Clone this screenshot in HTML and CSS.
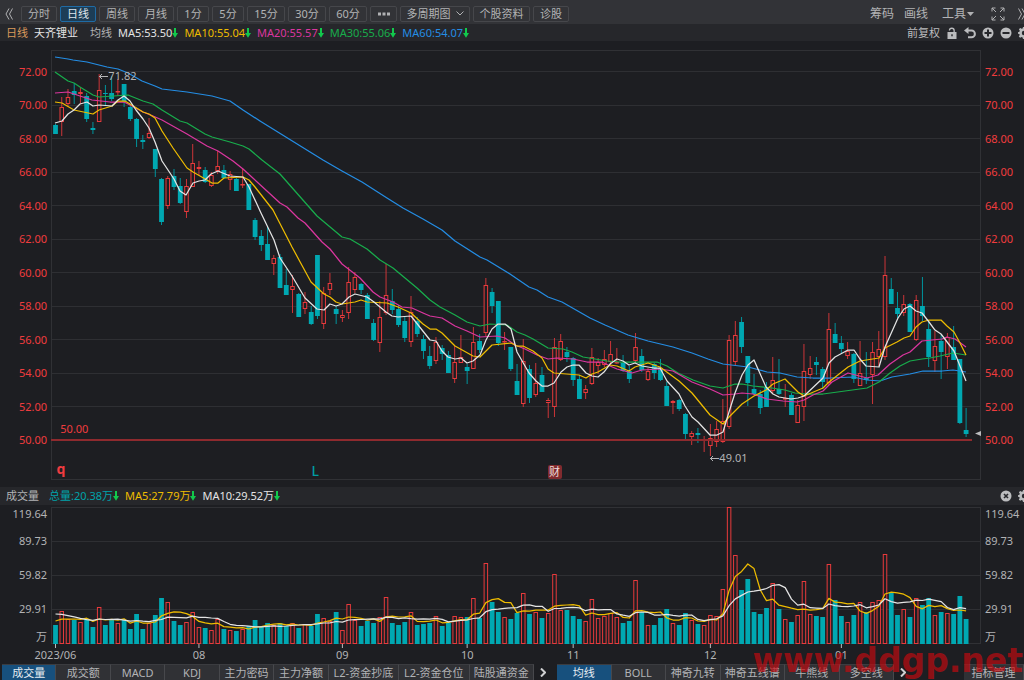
FILE: index.html
```html
<!DOCTYPE html>
<html lang="zh-CN">
<head>
<meta charset="utf-8">
<title>天齐锂业 日线</title>
<link rel="stylesheet" href="styles.css">
</head>
<body>
<svg class="defs" aria-hidden="true">
  <symbol id="down" viewBox="0 0 6 10"><path d="M2 0h2v5h2L3 9.800 0 5h2z" fill="currentColor"/></symbol>
  <symbol id="gear" viewBox="0 0 12 12"><path fill="currentColor" fill-rule="evenodd" d="M5 0h2l.4 1.700 1 .4L9.900 1.200l1.300 1.400-.8 1.500.4.900 1.200.3v1.600l-1.300.5-.4.900.8 1.600-1.300 1.200-1.500-.8-.9.400L7 12H5l-.4-1.600-1-.4-1.500.8L.8 9.500l.9-1.500-.4-1L0 6.800V5.200l1.400-.5.4-1L.9 2.300 2.200 1l1.500.8.9-.4zM6 3.800a2.200 2.200 0 1 0 0 4.400 2.200 2.200 0 0 0 0-4.400z"/></symbol>
  <symbol id="left-arrow" viewBox="0 0 9 7"><path d="M0 3.500h9M3 1L.5 3.500 3 6" fill="none" stroke="currentColor"/></symbol>
</svg>

<nav class="toolbar">
  <button class="more-left" aria-label="收起"><svg width="8" height="12" viewBox="0 0 8 12"><path d="M4 .5L1 6l3 5.500M7.500.5l-3 5.500 3 5.500"/></svg></button>
  <div class="periods">
    <button class="period">分时</button>
    <button class="period active">日线</button>
    <button class="period">周线</button>
    <button class="period">月线</button>
    <button class="period short">1分</button>
    <button class="period short">5分</button>
    <button class="period mid">15分</button>
    <button class="period mid">30分</button>
    <button class="period mid">60分</button>
    <button class="period dots" aria-label="更多周期"><svg width="12" height="4" viewBox="0 0 12 4"><path d="M0 .5h3v3H0zM4.500.5h3v3h-3zM9 .5h3v3H9z"/></svg></button>
    <button class="period multi">多周期图<svg width="8" height="5" viewBox="0 0 8 5"><path d="M.5.5L4 4 7.500.5"/></svg></button>
    <button class="period info">个股资料</button>
    <button class="period">诊股</button>
  </div>
  <div class="tools">
    <button>筹码</button>
    <button>画线</button>
    <button class="menu">工具<svg width="7" height="4" viewBox="0 0 7 4"><path d="M0 0h7L3.500 4z"/></svg></button>
    <button class="full" aria-label="全屏"><svg width="14" height="14" viewBox="0 0 14 14"><path d="M1 4.500V1h3.500M1 1l4 4M9.500 1H13v3.500M13 1L9 5M1 9.500V13h3.500M1 13l4-4M9.500 13H13V9.500M13 13L9 9"/></svg></button>
    <button class="more-right" aria-label="展开"><svg width="8" height="12" viewBox="0 0 8 12"><path d="M.5.5l3 5.500-3 5.500M4 .5L7 6l-3 5.500"/></svg></button>
  </div>
</nav>

<header class="legend">
  <span class="kind">日线</span>
  <span class="stock">天齐锂业</span>
  <span class="name">均线</span>
  <span class="white">MA5:53.50<svg><use href="#down"/></svg></span>
  <span class="yellow">MA10:55.04<svg><use href="#down"/></svg></span>
  <span class="pink">MA20:55.57<svg><use href="#down"/></svg></span>
  <span class="green">MA30:55.06<svg><use href="#down"/></svg></span>
  <span class="blue">MA60:54.07<svg><use href="#down"/></svg></span>
  <div class="actions">
    <button class="adjust">前复权</button>
    <button aria-label="锁定"><svg viewBox="0 0 12 12"><path fill="currentColor" fill-rule="evenodd" d="M1.500 5h6V3.500a1.800 1.800 0 0 0-3.500 0H2.800a3 3 0 0 1 6 0V5h1.700v7h-9zM5.300 7.200v2h1.400v-2z"/></svg></button>
    <button aria-label="撤销"><svg viewBox="0 0 12 12"><path d="M2 3.500h5.500a3.400 3.400 0 0 1 0 6.800H4" fill="none" stroke="currentColor" stroke-width="2"/><path d="M4.500 0v7L0 3.500z" fill="currentColor"/></svg></button>
    <button aria-label="放大"><svg viewBox="0 0 12 12"><circle cx="6" cy="6" r="5.500" fill="currentColor"/><path d="M6 2.500v7M2.500 6h7" stroke="#26272b" stroke-width="2"/></svg></button>
    <button aria-label="缩小"><svg viewBox="0 0 12 12"><circle cx="6" cy="6" r="5.500" fill="currentColor"/><path d="M2.500 6h7" stroke="#26272b" stroke-width="2"/></svg></button>
    <button class="cut" aria-label="设置"><svg><use href="#gear"/></svg></button>
  </div>
</header>

<main class="price">
  <div class="axis left">
    <span>72.00</span><span>70.00</span><span>68.00</span><span>66.00</span><span>64.00</span><span>62.00</span><span>60.00</span><span>58.00</span><span>56.00</span><span>54.00</span><span>52.00</span><span>50.00</span>
  </div>
  <div class="plot">
    <svg id="price" viewBox="51 50 930 430" preserveAspectRatio="none" role="img" aria-label="日线K线图"></svg>
    <span class="mark high"><svg><use href="#left-arrow"/></svg>71.82</span>
    <span class="mark low"><svg><use href="#left-arrow"/></svg>49.01</span>
    <span class="mark level">50.00</span>
    <span class="mark q">q</span>
    <span class="mark l">L</span>
    <span class="mark report">财</span>
  </div>
  <div class="axis right">
    <span>72.00</span><span>70.00</span><span>68.00</span><span>66.00</span><span>64.00</span><span>62.00</span><span>60.00</span><span>58.00</span><span>56.00</span><span>54.00</span><span>52.00</span><span>50.00</span>
  </div>
</main>

<header class="legend volume-legend">
  <span class="name">成交量</span>
  <span class="teal">总量:20.38万<svg><use href="#down"/></svg></span>
  <span class="yellow">MA5:27.79万<svg><use href="#down"/></svg></span>
  <span class="white">MA10:29.52万<svg><use href="#down"/></svg></span>
  <div class="actions">
    <button aria-label="关闭"><svg viewBox="0 0 12 12"><circle cx="6" cy="6" r="5.500" fill="currentColor"/><path d="M4 4l4 4M8 4L4 8" stroke="#26272b" stroke-width="1.600"/></svg></button>
    <button class="cut" aria-label="设置"><svg><use href="#gear"/></svg></button>
  </div>
</header>

<section class="volume">
  <div class="scale left"><span>119.64</span><span>89.73</span><span>59.82</span><span>29.91</span><span>万</span></div>
  <div class="bars"><svg id="volume" viewBox="51 507 930 137" preserveAspectRatio="none" role="img" aria-label="成交量图"></svg></div>
  <div class="scale right"><span>119.64</span><span>89.73</span><span>59.82</span><span>29.91</span><span>万</span></div>
  <div class="dates" id="dates"></div>
</section>

<footer class="tabs">
  <div class="group first">
    <button class="active">成交量</button><button>成交额</button><button>MACD</button><button>KDJ</button><button>主力密码</button><button>主力净额</button><button class="wide">L2-资金抄底</button><button class="wide">L2-资金仓位</button><button class="five">陆股通资金</button>
  </div>
  <button class="next" aria-label="更多指标"><svg width="6" height="9" viewBox="0 0 6 9"><path d="M1 .5l4 4-4 4"/></svg></button>
  <div class="group second">
    <button class="active">均线</button><button>BOLL</button><button>神奇九转</button><button class="five">神奇五线谱</button><button>牛熊线</button><button>多空线</button>
  </div>
  <button class="next" aria-label="更多主图指标"><svg width="6" height="9" viewBox="0 0 6 9"><path d="M1 .5l4 4-4 4"/></svg></button>
  <button class="manage">指标管理</button>
</footer>
<div class="watermark">www.ddgp.net</div>
<script src="chart.js"></script>
</body>
</html>
```
FILE: styles.css
```css
* { box-sizing: border-box; }
body {
  margin: 0;
  height: 100vh;
  display: flex;
  flex-direction: column;
  position: relative;
  overflow: hidden;
  background: #1d1e22;
  color: #b2b3b5;
  font: 11px/16px "Noto Sans", "Noto Sans CJK SC", sans-serif;
}
button {
  margin: 0;
  padding: 0;
  border: 0;
  background: none;
  color: inherit;
  font: inherit;
  white-space: nowrap;
}
svg { display: block; }
.defs { position: absolute; width: 0; height: 0; }

.toolbar {
  flex: 0 0 24px;
  display: flex;
  align-items: center;
  padding-top: 3px;
  background: #323337;
  overflow: hidden;
}
.more-left { width: 21px; padding-left: 5px; }
.more-left path, .more-right path, .full path, .multi path {
  fill: none;
  stroke: #b0b1b3;
}
.periods { display: flex; gap: 3px; }
.period {
  width: 36px;
  height: 16px;
  border: 1px solid #46474b;
  border-radius: 2px;
  line-height: 14px;
}
.period.active { background: #1d3d56; border-color: #1f6ba5; color: #dfe6ec; }
.period.short { width: 32px; }
.period.mid { width: 38px; }
.period.dots { width: 27px; }
.period.multi { width: 70px; }
.period.info { width: 57px; }
.dots, .multi { display: flex; align-items: center; justify-content: center; gap: 5px; }
.dots path, .menu path { fill: #b0b1b3; }

.tools {
  flex: none;
  display: flex;
  align-items: center;
  gap: 10px;
  margin-left: auto;
  font-size: 12px;
}
.menu { display: flex; align-items: center; gap: 1px; margin-left: 4px; }
.full { margin-left: 7px; }
.more-right { width: 6px; margin-left: 3px; overflow: hidden; }

.legend {
  flex: 0 0 17px;
  display: flex;
  align-items: center;
  gap: 6px;
  padding-left: 6px;
  background: #26272b;
  white-space: nowrap;
  overflow: hidden;
}
.legend span { display: flex; align-items: center; }
.legend span svg { width: 6px; height: 10px; color: #12c94c; }
.kind { color: #d99a5c; }
.stock { color: #e3e3e3; }
.stock + .name { margin-left: 6px; }
.white { color: #e4e4e4; }
.yellow { color: #eebc00; }
.pink { color: #db369f; }
.green { color: #18ad4c; }
.blue { color: #248de4; }
.teal { color: #00a2a9; }
.actions {
  flex: none;
  display: flex;
  align-items: center;
  gap: 6px;
  margin-left: auto;
  color: #bbbcbe;
}
.actions svg { width: 12px; height: 12px; }
.cut { width: 6px; overflow: hidden; }
.volume-legend { flex-basis: 18px; }
.volume-legend .teal { margin-left: 4px; }

.price {
  flex: 446 1 0;
  min-height: 0;
  display: grid;
  grid-template-columns: 51px 1fr 43px;
}
.axis {
  display: flex;
  flex-direction: column;
  justify-content: space-between;
  padding: 23px 4px 39px;
  color: #f03c3e;
}
.left { text-align: right; padding-right: 4px; }
.right { padding-left: 4px; }
.plot { position: relative; margin: 9px 0 7px; min-height: 0; }
.plot > svg, .bars > svg { width: 100%; height: 100%; overflow: visible; }

.frame { fill: none; stroke: #303135; }
.grid { stroke: #2e2f33; }
.level-line { stroke: #8e2a2e; stroke-width: 2; }
.pointer { fill: #bbbcbe; }
.up { stroke: #e83a3c; fill: #1d1e22; }
.up-wick { stroke: #cc3538; }
.down { fill: #00a8b2; }
.down-wick { stroke: #00949d; }
.tick { stroke: #bbbcbe; }
.line { fill: none; stroke: currentColor; stroke-width: 1.25; stroke-linejoin: round; }

.mark { position: absolute; display: flex; align-items: center; line-height: 12px; }
.mark svg { width: 9px; height: 7px; }
.high { left: 5.2%; top: 4.700%; }
.low { left: 70.900%; top: 93.500%; }
.level { left: 1%; top: 86.700%; color: #f03c3e; }
.q { left: 0.600%; top: 96%; color: #ef3c40; font-size: 14px; font-weight: bold; }
.l { left: 28%; top: 96.500%; color: #009ca3; font-size: 14px; font-weight: 500; }
.report {
  left: 53.400%;
  top: 96.500%;
  width: 14px;
  height: 14px;
  justify-content: center;
  border-radius: 2px;
  background: #812b2f;
  color: #f0dede;
}

.volume {
  flex: 159 1 0;
  min-height: 0;
  display: grid;
  grid-template-columns: 51px 1fr 43px;
  grid-template-rows: minmax(0, 1fr) 16px;
}
.scale {
  display: grid;
  grid-template-rows: 18fr 35fr 34fr 34fr 22fr;
  align-items: center;
}
.bars { padding: 2px 0 4px; min-height: 0; }
.dates { position: relative; grid-column: 2; }
.dates span { position: absolute; transform: translateX(-50%); line-height: 14px; }

.tabs { flex: 0 0 16px; display: flex; padding-left: 2px; }
.group { display: flex; }
.first { flex: 0 0 532px; }
.second { flex: 0 0 337px; }
.group button, .manage {
  flex: 1 0 54px;
  border-right: 1px solid #47484c;
  border-top: 1px solid #3b3c40;
  background: #303135;
  line-height: 15px;
}
.group .wide { flex-basis: 70px; }
.group .five { flex-basis: 64px; }
.group .active { background: #17507d; color: #e6edf2; }
.next { width: 23px; padding-left: 6px; }
.next path { fill: none; stroke: #d0d1d3; stroke-width: 2; }
.manage { flex: 0 0 60px; margin-left: auto; }

.watermark {
  position: absolute;
  right: 1px;
  bottom: 0;
  color: rgba(200, 10, 15, 0.66);
  font: bold 33px/38px "DejaVu Sans", sans-serif;
  pointer-events: none;
}
```
FILE: chart.js
```js
const NS = 'http://www.w3.org/2000/svg';
const STEP = 6.237;
const xAt = i => 55.5 + i * STEP;

// One candle per day: direction, high, body top, body bottom, low (chart units).
const candles = `
C124,125,134,134 R97,107,122,136 R89,97,104,107 C83,91,95,104 R87,92,94,104 C93,96,119,122 C122,128,130,134
R74,90,122,122 C85,93,94,105 C76,93,99,101 R79,91,92,96 C84,84,101,107 C106,107,119,121 C118,119,139,147
C135,140,142,149 R118,133,138,139 C149,149,169,177 C178,179,222,225 R176,178,206,209 C169,176,187,190
C178,186,203,204 R179,186,212,218 R144,163,187,187 R161,167,169,175 C167,170,182,183 R172,175,186,187
R151,166,171,174 C165,170,178,179 R171,174,180,190 C178,179,191,191 R168,184,185,188 C184,184,210,210
C218,220,237,240 C230,236,245,251 C227,244,260,260 R255,258,264,275 C254,257,288,288 C269,285,295,295
R275,286,290,313 C293,294,317,317 R292,302,309,314 C306,312,324,325 C255,255,316,319 R287,293,324,329
R273,283,290,295 C306,309,314,324 R310,315,318,322 R267,282,313,319 R272,277,290,293 C283,284,290,294
C293,295,319,319 C319,323,340,341 R301,317,343,352 R264,295,313,315 C289,301,310,314 C305,309,325,327
C317,321,338,342 R296,312,342,347 C317,321,334,337 C335,339,351,359 C346,356,366,369 R337,342,361,364
C345,348,354,360 C351,355,373,373 R346,362,379,383 R335,357,363,363 C364,367,371,384 R327,342,369,369
C334,341,350,353 R278,285,333,336 C288,292,306,313 C301,301,343,346 R332,341,342,350 C347,347,369,371
C364,381,395,395 R339,361,404,407 C365,369,398,403 R363,383,395,397 C367,375,392,392 R398,400,403,418
R338,347,407,417 R334,341,360,361 C347,352,357,362 C357,358,380,386 C375,379,399,399 R385,389,393,399
R348,357,384,385 R358,362,366,374 R350,359,365,367 R341,354,362,365 R348,362,363,364 C355,363,371,372
C366,371,379,383 R333,347,361,363 C349,356,370,372 R368,371,380,381 C363,364,373,379 C359,368,380,381
C382,386,406,406 R400,401,403,414 C399,400,409,411 C413,414,434,440 R431,433,437,445 C428,433,435,443
R436,439,440,452 R424,438,446,456 R421,429,442,447 R399,421,442,443 R335,340,427,429 R321,335,362,366
C317,322,347,353 C356,356,383,406 C374,389,394,395 C390,394,408,414 C382,387,407,407 R357,380,391,393
C359,389,394,395 R384,398,399,407 C393,395,415,415 R400,405,423,423 R344,371,407,421 R356,368,375,379
C357,362,365,375 C367,369,382,389 R313,329,383,385 C323,334,343,343 C336,343,349,353 R342,351,356,359
C353,354,379,383 R341,373,386,386 C352,378,380,384 R342,352,375,404 R331,349,357,366 R256,275,357,360
C278,289,304,304 C292,308,314,318 R295,304,313,316 C303,304,332,332 R295,300,340,341 C277,306,316,321
C322,329,357,367 R331,346,361,372 C335,341,352,379 R333,337,357,369 C326,347,360,360 C359,359,423,424
C408,430,434,437`.trim().split(/\s+/).map(s => [s[0] === 'R', ...s.slice(1).split(',').map(Number)]);

const averages = {
  blue: '55,57 68,59 73,60 87,62 99,65 107,67 118,69 128,73 142,81 155,86 162,89 187,92 212,96 230,101 243,110 260,121 323,160 342,171 362,182 387,198 403,208 423,219 442,230 455,241 480,257 487,260 510,274 529,287 537,290 548,297 562,302 590,318 605,325 628,335 648,341 673,347 692,353 708,359 723,364 748,367 767,372 780,373 797,377 813,378 830,378 853,377 867,380 880,381 892,377 910,374 923,371 942,371 953,370 966,372',
  green: '55,72 68,81 74,83 80,87 93,95 99,97 128,95 143,101 153,104 162,110 180,121 187,123 205,134 212,137 230,142 243,146 249,149 262,160 280,174 317,216 342,237 350,239 367,249 380,260 393,268 405,278 417,288 430,300 440,307 455,315 467,322 480,326 490,324 507,325 517,332 525,335 533,339 548,348 563,349 572,352 583,357 607,361 620,362 657,362 667,366 678,373 693,380 710,386 723,388 735,384 742,384 753,386 772,388 785,390 795,393 807,394 823,394 867,388 879,382 890,373 900,366 910,361 922,359 930,358 940,356 953,353 966,355',
  pink: '55,93 68,92 80,96 92,100 110,102 124,102 132,106 143,112 153,116 162,120 187,134 207,146 218,151 233,161 243,169 280,203 287,207 298,218 305,223 322,242 330,249 342,264 360,278 373,292 380,297 393,302 402,307 412,308 423,313 430,316 442,318 455,326 467,331 480,337 497,336 505,338 515,345 525,349 537,355 548,359 557,358 573,359 587,362 602,362 610,366 617,369 632,373 642,370 660,369 673,371 692,382 710,389 723,395 735,394 742,393 753,394 767,399 783,401 797,402 804,400 813,395 823,391 832,382 848,373 867,378 878,375 890,364 903,355 910,352 922,341 942,339 947,337 955,339 966,347',
  yellow: '55,102 62,103 74,110 93,114 99,110 112,106 118,101 125,101 130,104 143,112 149,114 155,118 162,131 173,148 187,168 193,172 200,176 212,183 218,183 224,178 243,177 249,180 255,187 273,210 292,247 311,282 324,294 330,297 336,302 342,304 355,302 361,300 367,302 387,303 398,307 411,313 423,324 430,329 436,329 442,333 455,346 473,356 480,357 486,351 492,345 511,343 517,346 523,346 533,351 542,358 548,369 554,373 579,375 586,378 592,374 598,372 610,365 617,366 629,371 635,367 648,363 660,367 679,381 692,393 710,415 723,424 729,417 742,404 754,396 766,390 773,384 785,379 798,392 804,396 823,388 829,382 848,367 860,361 879,358 885,348 897,342 904,338 910,336 916,327 922,322 929,320 941,320 947,326 954,332 960,343 966,355',
  white: '55,123 62,121 68,114 74,110 80,104 87,102 93,106 99,105 112,106 118,100 124,96 130,101 136,110 143,119 149,128 155,142 162,161 174,179 180,191 186,195 193,183 199,181 205,180 211,174 218,171 230,176 243,177 249,187 261,213 274,240 280,258 292,276 305,298 317,309 324,310 330,304 336,306 342,304 349,297 355,294 367,297 374,302 386,312 392,316 398,317 411,316 430,340 436,341 442,351 448,357 455,359 461,358 467,363 473,361 480,355 486,340 492,329 498,324 505,324 511,329 517,352 529,373 536,381 542,386 548,386 554,383 561,372 567,367 573,365 579,365 586,373 592,376 598,377 604,372 610,364 617,359 623,361 629,365 635,363 642,366 654,368 660,368 667,381 679,394 685,406 692,417 698,422 710,435 717,435 723,432 729,412 735,393 742,375 748,365 754,360 766,387 773,394 779,397 791,399 798,398 804,396 823,378 829,363 835,357 848,350 854,350 860,359 866,366 879,367 885,347 898,318 904,309 910,306 916,311 922,313 929,322 935,330 941,334 954,351 960,366 966,381'
};

const volumes = [625,611,619,620,622,619,627,607,625,619,623,620,629,614,629,623,615,598,602,621,625,622,612,627,628,630,619,629,630,631,629,626,620,627,623,625,623,626,623,628,624,626,614,618,621,612,630,604,
620,626,621,623,617,597,623,625,622,612,625,624,623,616,626,623,616,617,617,598,618,563,602,612,617,619,613,593,614,612,618,613,574,610,610,616,619,621,599,618,616,613,617,623,621,580,612,625,625,618,609,623,625,613,620,
624,625,615,616,589,507,555,590,579,612,614,608,583,609,619,622,615,581,614,616,617,564,600,616,622,615,602,612,602,600,554,593,615,609,617,598,605,598,615,612,613,614,596,619];
const earlierVolumes = [607,607,607,607,607,620,620,620,620];

function draw(parent, tag, className, attrs) {
  const node = document.createElementNS(NS, tag);
  node.setAttribute('class', className);
  for (const key in attrs) node.setAttribute(key, attrs[key]);
  parent.appendChild(node);
}
function segment(parent, className, x1, y1, x2, y2) {
  draw(parent, 'line', className, { x1, y1, x2, y2 });
}
function box(parent, rising, x, top, bottom) {
  if (rising) {
    draw(parent, 'rect', 'up', { x: x - 1.75, y: top + 0.5, width: 3.5, height: Math.max(bottom - top - 1, 0.5) });
  } else {
    draw(parent, 'rect', 'down', { x: x - 2.4, y: top, width: 4.8, height: Math.max(bottom - top, 1) });
  }
}

const price = document.getElementById('price');
for (let n = 0; n < 11; n++) {
  const y = Math.floor(71.5 + n * 33.5) + 0.5;
  segment(price, 'grid', 51, y, 981, y);
}
draw(price, 'rect', 'frame', { x: 51.5, y: 50.5, width: 929, height: 429 });
candles.forEach(([rising, high, top, bottom, low], i) => {
  const x = xAt(i);
  segment(price, rising ? 'up-wick' : 'down-wick', x, high, x, low);
  box(price, rising, x, top, bottom);
});
segment(price, 'level-line', 51, 440, 972, 440);
for (const name in averages) draw(price, 'polyline', 'line ' + name, { points: averages[name] });
draw(price, 'path', 'pointer', { d: 'M975 433.5L981 431v5z' });

const volume = document.getElementById('volume');
[541.5, 575.5, 609.5].forEach(y => segment(volume, 'grid', 51, y, 981, y));
draw(volume, 'rect', 'frame', { x: 51.5, y: 507.5, width: 929, height: 136 });
volumes.forEach((top, i) => box(volume, candles[i][0], xAt(i), top, 644));

function movingAverage(days) {
  const all = earlierVolumes.concat(volumes);
  return volumes.map((_, i) => {
    const end = i + earlierVolumes.length + 1;
    const sum = all.slice(end - days, end).reduce((a, b) => a + b, 0);
    return xAt(i).toFixed(1) + ',' + (sum / days).toFixed(1);
  }).join(' ');
}
draw(volume, 'polyline', 'line yellow', { points: movingAverage(5) });
draw(volume, 'polyline', 'line white', { points: movingAverage(10) });

const dates = document.getElementById('dates');
[['2023/06', 0], ['08', 23], ['09', 46], ['10', 66], ['11', 83], ['12', 105], ['01', 126]].forEach(([label, i]) => {
  const x = xAt(i);
  segment(volume, 'tick', x, 644, x, 648);
  const node = document.createElement('span');
  node.textContent = label;
  node.style.left = ((x - 51) / 930 * 100).toFixed(2) + '%';
  dates.appendChild(node);
});
```
